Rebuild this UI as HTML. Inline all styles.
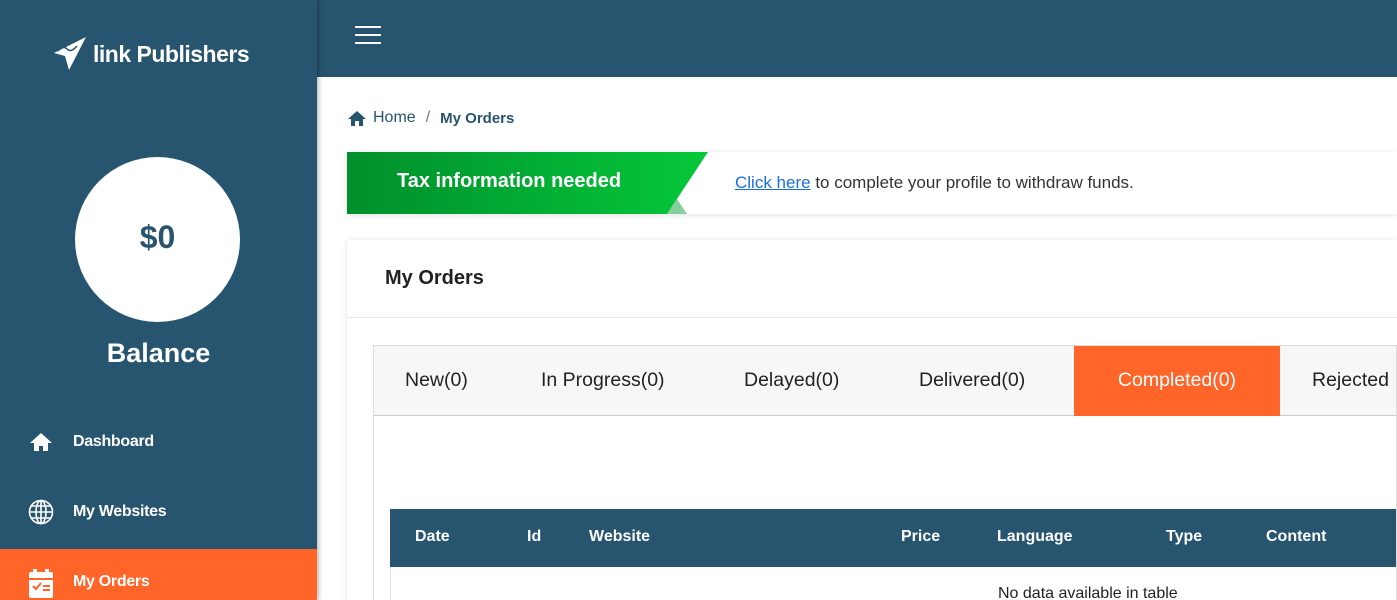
<!DOCTYPE html>
<html style="width:1397px;height:600px;overflow:hidden"><head><style>
*{box-sizing:border-box;margin:0;padding:0}
body{width:1397px;height:600px;overflow:hidden;font-family:"Liberation Sans",sans-serif;background:#f4f5f7;position:relative}
.side{position:absolute;left:0;top:0;width:317px;height:600px;background:#27556f;color:#fff;box-shadow:2px 0 4px rgba(0,0,0,.25);z-index:2;overflow:hidden}
.logo{position:absolute;left:53px;top:36px;display:flex;align-items:center;font-weight:bold;font-size:23px;letter-spacing:-0.5px}
.circle{position:absolute;left:75px;top:157px;width:165px;height:165px;border-radius:50%;background:#fff;color:#27556f;font-weight:bold;font-size:32px;text-align:center;line-height:160px}
.bal{position:absolute;left:0;width:317px;top:338px;text-align:center;font-weight:bold;font-size:27px}
.nav{position:absolute;left:0;width:317px;height:70px;display:flex;align-items:center;font-weight:bold;font-size:16px;letter-spacing:-0.3px}
.nav svg{position:absolute;left:28px}
.nav span{position:absolute;left:73px}
.top{position:absolute;left:317px;top:0;right:0;height:77px;background:#27556f}
.main{position:absolute;left:317px;top:77px;right:0;height:523px;background:#fff;overflow:hidden}
</style></head><body>
<div class="side">
 <div class="logo"><svg width="34" height="36" viewBox="0 0 34 36"><path d="M33 1 L1 17 L12 20 L16 34 Z" fill="#fff"/><path d="M5 15 Q10 9 14 13 Q18 17 24 10" stroke="#27556f" stroke-width="1.5" fill="none"/></svg><span style="margin-left:6px">link Publishers</span></div>
 <div class="circle">$0</div>
 <div class="bal">Balance</div>
 <div class="nav" style="top:407px"><svg width="26" height="22" viewBox="0 0 26 22"><path d="M13 2 L2 12 H6 V20 H11 V15 H15 V20 H20 V12 H24 Z" fill="#fff"/></svg><span>Dashboard</span></div>
 <div class="nav" style="top:477px"><svg width="26" height="26" viewBox="0 0 26 26" fill="none" stroke="#fff" stroke-width="1.6"><circle cx="13" cy="13" r="11.5"/><ellipse cx="13" cy="13" rx="5" ry="11.5"/><path d="M1.5 13H24.5M3.5 7H22.5M3.5 19H22.5M13 1.5V24.5"/></svg><span>My Websites</span></div>
 <div class="nav" style="top:549px;background:#ff6428;align-items:flex-start"><svg width="26" height="30" viewBox="0 0 26 30" style="top:20px"><rect x="1" y="3" width="24" height="26" rx="2" fill="#fff"/><rect x="5" y="0" width="4" height="5" fill="#fff"/><rect x="17" y="0" width="4" height="5" fill="#fff"/><rect x="1" y="9" width="24" height="2" fill="#ff6428"/><path d="M5 17l3 3 5-6" stroke="#ff6428" stroke-width="2" fill="none"/><rect x="15" y="16" width="7" height="2" fill="#ff6428"/><rect x="15" y="20" width="7" height="2" fill="#ff6428"/></svg><span style="top:24px">My Orders</span></div>
</div>
<div class="top"><div style="position:absolute;left:38px;top:26px;width:26px"><div style="height:2px;background:#fff;margin-bottom:6px"></div><div style="height:2px;background:#fff;margin-bottom:6px"></div><div style="height:2px;background:#fff"></div></div></div>
<div class="main">
 <div style="position:absolute;left:30px;top:32px;font-size:16px;color:#27556f;display:flex;align-items:center"><svg width="20" height="17" viewBox="0 0 20 17"><path d="M10 1 L1 9 H4 V16 H8 V11 H12 V16 H16 V9 H19 Z" fill="#27556f"/></svg><span style="margin-left:6px">Home</span><span style="margin:0 10px;color:#777">/</span><b style="font-size:15px">My Orders</b></div>
 <div style="position:absolute;left:30px;top:75px;right:0;height:62px;background:#fff;box-shadow:0 1px 6px rgba(0,0,0,.12)">
  <svg width="362" height="62" style="position:absolute;left:0;top:0"><defs><linearGradient id="g"><stop offset="0" stop-color="#008f2c"/><stop offset="1" stop-color="#05c83a"/></linearGradient></defs><polygon points="0,0 361,0 320,62 0,62" fill="url(#g)"/><polygon points="320,62 330,47 340,62" fill="#86cf9c"/></svg>
  <div style="position:absolute;left:50px;top:18px;color:#fff;font-weight:bold;font-size:20px">Tax information needed</div>
  <div style="position:absolute;left:388px;top:21px;font-size:17px;color:#333"><u style="color:#1a6fe0">Click here</u> to complete your profile to withdraw funds.</div>
 </div>
 <div style="position:absolute;left:30px;top:163px;right:0;height:400px;background:#fff;box-shadow:0 0 6px rgba(0,0,0,.1)">
  <div style="position:absolute;left:38px;top:27px;font-size:20px;font-weight:bold;color:#222">My Orders</div>
  <div style="position:absolute;left:0;right:0;top:77px;border-top:1px solid #e5e5e5"></div>
  <div style="position:absolute;left:26px;top:105px;right:0;height:300px;border:1px solid #ddd">
   <div style="height:70px;background:#f7f7f7;border-bottom:1px solid #ccc;position:relative;font-size:19.5px;color:#222">
    <span style="position:absolute;left:31px;top:23px">New(0)</span>
    <span style="position:absolute;left:167px;top:23px">In Progress(0)</span>
    <span style="position:absolute;left:370px;top:23px">Delayed(0)</span>
    <span style="position:absolute;left:545px;top:23px">Delivered(0)</span>
    <div style="position:absolute;left:700px;top:0;width:206px;height:70px;background:#ff6428;color:#fff;text-align:center;line-height:68px">Completed(0)</div>
    <span style="position:absolute;left:938px;top:23px">Rejected</span>
   </div>
   <div style="position:absolute;left:16px;top:163px;right:0;height:58px;background:#27556f;color:#fff;font-weight:bold;font-size:16px">
    <span style="position:absolute;left:25px;top:19px">Date</span>
    <span style="position:absolute;left:137px;top:19px">Id</span>
    <span style="position:absolute;left:199px;top:19px">Website</span>
    <span style="position:absolute;left:511px;top:19px">Price</span>
    <span style="position:absolute;left:607px;top:19px">Language</span>
    <span style="position:absolute;left:776px;top:19px">Type</span>
    <span style="position:absolute;left:876px;top:19px">Content</span>
   </div>
   <div style="position:absolute;left:16px;top:221px;right:0;height:40px;border-left:1px solid #ddd;font-size:16px;color:#222"><span style="position:absolute;left:607px;top:18px">No data available in table</span></div>
  </div>
 </div>
</div>
</body></html>
